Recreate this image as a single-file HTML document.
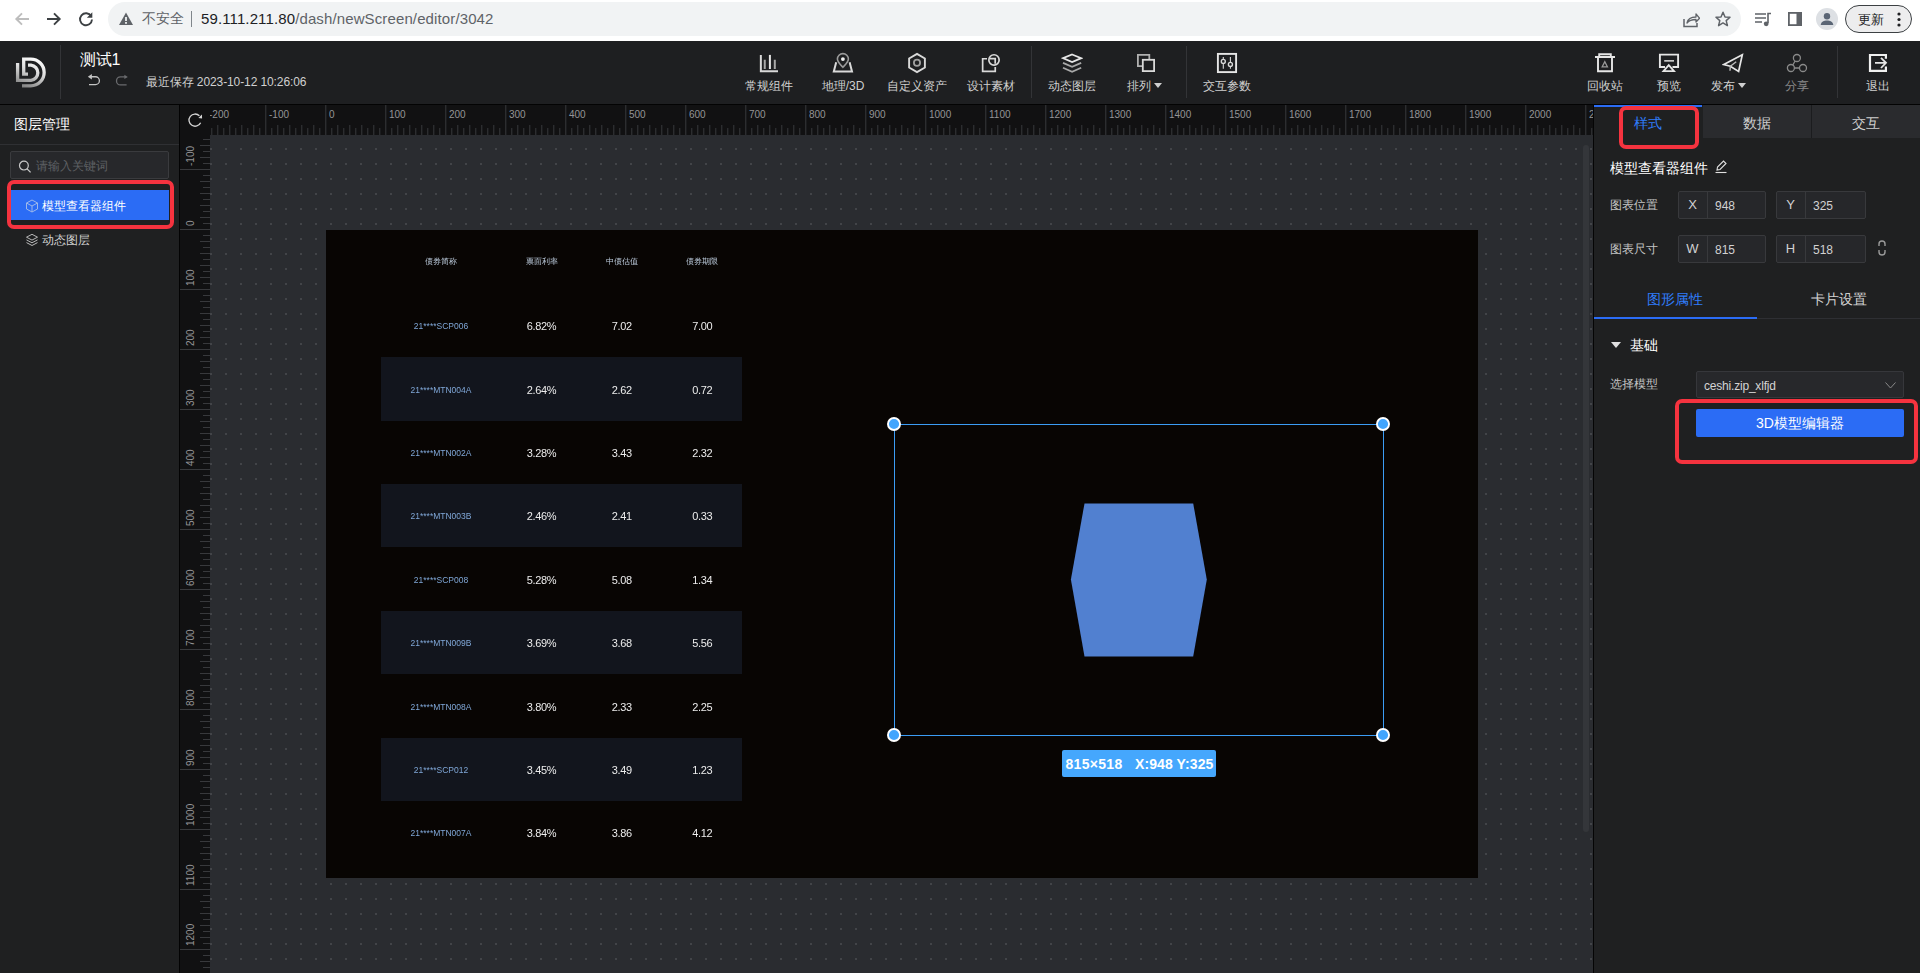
<!DOCTYPE html><html><head><meta charset="utf-8"><style>
*{margin:0;padding:0;box-sizing:border-box}
html,body{width:1920px;height:973px;overflow:hidden;background:#1f2021;font-family:"Liberation Sans", sans-serif}
.a{position:absolute}
.t{position:absolute;white-space:nowrap;line-height:1}
svg{display:block}
</style></head><body><div class="a" style="left:0;top:0;width:1920px;height:41px;background:#ffffff"></div>
<div class="a" style="left:108px;top:2px;width:1633px;height:34px;border-radius:17px;background:#f1f3f4"></div>
<svg class="a" style="left:13px;top:10px" width="18" height="18" viewBox="0 0 18 18"><path d="M16 9H3.5M9 3.3L3.3 9L9 14.7" fill="none" stroke="#bdbdbd" stroke-width="1.9"/></svg>
<svg class="a" style="left:45px;top:10px" width="18" height="18" viewBox="0 0 18 18"><path d="M2 9H14.5M9 3.3L14.7 9L9 14.7" fill="none" stroke="#3c4043" stroke-width="1.9"/></svg>
<svg class="a" style="left:77px;top:10px" width="18" height="18" viewBox="0 0 18 18"><path d="M14.2 6.2A6 6 0 1 0 15 9.5" fill="none" stroke="#3c4043" stroke-width="1.9"/><path d="M15.3 2.3V7.8H9.8Z" fill="#3c4043"/></svg>
<svg class="a" style="left:118px;top:11px" width="16" height="16" viewBox="0 0 16 16"><path d="M8 1.5L15 14H1Z" fill="#5f6368"/><rect x="7.1" y="6" width="1.8" height="4" fill="#f1f3f4"/><rect x="7.1" y="11" width="1.8" height="1.8" fill="#f1f3f4"/></svg>
<div class="t" style="left:142px;top:11px;font-size:14px;color:#5f6368">不安全</div>
<div class="a" style="left:191px;top:11px;width:1px;height:16px;background:#80868b"></div>
<div class="t" style="left:201px;top:10.5px;font-size:15px;letter-spacing:0.12px;color:#5f6368"><span style="color:#202124">59.111.211.80</span>/dash/newScreen/editor/3042</div>
<svg class="a" style="left:1683px;top:11px" width="17" height="17" viewBox="0 0 17 17"><path d="M1 8V15.5H14V12" fill="none" stroke="#5f6368" stroke-width="1.5"/><path d="M4 12C5 7 9 6 13 6V3L16.5 7.2L13 11V8.5C9 8.5 6 9.5 4 12Z" fill="none" stroke="#5f6368" stroke-width="1.3" stroke-linejoin="round"/></svg>
<svg class="a" style="left:1715px;top:11px" width="16" height="16" viewBox="0 0 16 16"><path d="M8 1.2L10 6L15 6.3L11.2 9.6L12.4 14.6L8 11.9L3.6 14.6L4.8 9.6L1 6.3L6 6Z" fill="none" stroke="#5f6368" stroke-width="1.5" stroke-linejoin="round"/></svg>
<svg class="a" style="left:1754px;top:12px" width="18" height="15" viewBox="0 0 18 15"><path d="M1 2H12M1 6H12M1 10H8" stroke="#5f6368" stroke-width="1.6"/><path d="M14 11V1.5H17" fill="none" stroke="#5f6368" stroke-width="1.6"/><circle cx="12.2" cy="11.8" r="2.4" fill="#5f6368"/></svg>
<svg class="a" style="left:1788px;top:12px" width="14" height="14" viewBox="0 0 14 14"><rect x="0.9" y="0.9" width="12.2" height="12.2" fill="none" stroke="#5f6368" stroke-width="1.8"/><rect x="8.5" y="0.9" width="4.6" height="12.2" fill="#5f6368"/></svg>
<div class="a" style="left:1816px;top:8px;width:22px;height:22px;border-radius:50%;background:#dde0e4"></div>
<svg class="a" style="left:1816px;top:8px" width="22" height="22" viewBox="0 0 22 22"><circle cx="11" cy="8.3" r="3.2" fill="#5a6575"/><path d="M4.7 17C5.2 13.6 8 12.6 11 12.6S16.8 13.6 17.3 17Z" fill="#5a6575"/></svg>
<div class="a" style="left:1845px;top:5px;width:67px;height:28px;border-radius:14px;border:1px solid #3c4043;background:#ededee"></div>
<div class="t" style="left:1858px;top:12.5px;font-size:13px;color:#202124">更新</div>
<svg class="a" style="left:1895.5px;top:11px" width="6" height="17" viewBox="0 0 6 17"><circle cx="3" cy="3" r="1.6" fill="#202124"/><circle cx="3" cy="8.5" r="1.6" fill="#202124"/><circle cx="3" cy="14" r="1.6" fill="#202124"/></svg>
<div class="a" style="left:0;top:41px;width:1920px;height:63px;background:#1e1f21"></div>
<div class="a" style="left:0;top:104px;width:1920px;height:1px;background:#030303"></div>
<svg class="a" style="left:10px;top:50px" width="45" height="45" viewBox="10 50 45 45"><defs><linearGradient id="lg" gradientUnits="userSpaceOnUse" x1="36" y1="57" x2="24" y2="89"><stop offset="0" stop-color="#ffffff"/><stop offset="0.4" stop-color="#e0e0e0"/><stop offset="1" stop-color="#7a7a7a"/></linearGradient></defs>
<path d="M17.6 63V80.4H31A7.7 7.7 0 0 0 31 65.1H28" fill="none" stroke="url(#lg)" stroke-width="3.3"/>
<path d="M28 74.1H23.7V59.1H30.8A13.35 13.35 0 0 1 30.8 85.8H22" fill="none" stroke="url(#lg)" stroke-width="3.3"/></svg>
<div class="a" style="left:60px;top:45px;width:1px;height:54px;background:#333437"></div>
<div class="t" style="left:80px;top:52px;font-size:16px;color:#ffffff;letter-spacing:-0.3px">测试1</div>
<svg class="a" style="left:87px;top:73px" width="14" height="14" viewBox="0 0 14 14"><path d="M4 3.75H8.5A3.9 3.9 0 0 1 8.5 11.55H2" fill="none" stroke="#c4c4c4" stroke-width="1.3"/><path d="M0.8 3.75L4.9 0.9V6.6Z" fill="#c4c4c4"/></svg>
<svg class="a" style="left:115px;top:73px" width="14" height="14" viewBox="0 0 14 14"><path d="M10 3.9H5.5A4 4 0 0 0 5.5 11.9H11.6" fill="none" stroke="#6a6b6e" stroke-width="1.3"/><path d="M12.8 3.9L9.4 1.7V6.1Z" fill="#6a6b6e"/></svg>
<div class="t" style="left:146px;top:76px;font-size:12px;color:#d0d0d0;letter-spacing:-0.1px">最近保存 2023-10-12 10:26:06</div>
<svg class="a" style="left:758px;top:52px" width="22" height="22" viewBox="0 0 22 22"><path d="M2.85 2.9V19.25H20" fill="none" stroke="#d9d9d9" stroke-width="2"/><path d="M11.9 2.9V17" fill="none" stroke="#e6e6e6" stroke-width="2"/><path d="M6.75 7.8V17M16.8 7.8V17" fill="none" stroke="#a8a8a8" stroke-width="2"/></svg>
<div class="t" style="left:729px;top:80px;width:80px;text-align:center;font-size:12px;color:#cfcfcf">常规组件</div>
<svg class="a" style="left:832px;top:52px" width="22" height="22" viewBox="0 0 22 22"><path d="M10.9 15.3C8.3 12.6 5.4 10 5.4 7.1A5.5 5.5 0 0 1 16.4 7.1C16.4 10 13.5 12.6 10.9 15.3Z" fill="none" stroke="#9a9a9a" stroke-width="1.6"/><circle cx="10.9" cy="7.1" r="1.9" fill="#f0f0f0"/><path d="M4.2 10.2L1.8 19.5H20L17.6 10.2" fill="none" stroke="#d9d9d9" stroke-width="2"/></svg>
<div class="t" style="left:803px;top:80px;width:80px;text-align:center;font-size:12px;color:#cfcfcf">地理/3D</div>
<svg class="a" style="left:906px;top:52px" width="22" height="22" viewBox="0 0 22 22"><path d="M11 1.9L18.88 6.45V15.55L11 20.1L3.12 15.55V6.45Z" fill="none" stroke="#d9d9d9" stroke-width="1.9"/><circle cx="11" cy="10.8" r="3.1" fill="none" stroke="#a0a0a0" stroke-width="1.8"/></svg>
<div class="t" style="left:877px;top:80px;width:80px;text-align:center;font-size:12px;color:#cfcfcf">自定义资产</div>
<svg class="a" style="left:980px;top:52px" width="22" height="22" viewBox="0 0 22 22"><path d="M7 6.75H2.65V19.35H15.25V15" fill="none" stroke="#d9d9d9" stroke-width="1.7"/><circle cx="14" cy="7.9" r="5.15" fill="none" stroke="#d9d9d9" stroke-width="1.7"/><path d="M9.8 6.6H15.2V11.8" fill="none" stroke="#d9d9d9" stroke-width="1.7"/></svg>
<div class="t" style="left:951px;top:80px;width:80px;text-align:center;font-size:12px;color:#cfcfcf">设计素材</div>
<div class="a" style="left:1031px;top:46px;width:1px;height:52px;background:#333437"></div>
<svg class="a" style="left:1061px;top:52px" width="22" height="22" viewBox="0 0 22 22"><path d="M11.1 2.5L20.2 6.2L11.1 10L2 6.2Z" fill="none" stroke="#e6e6e6" stroke-width="1.8"/><path d="M2 10.9L11.1 14.8L20.2 10.9M2 15.8L11.1 19.8L20.2 15.8" fill="none" stroke="#a8a8a8" stroke-width="1.8"/></svg>
<div class="t" style="left:1032px;top:80px;width:80px;text-align:center;font-size:12px;color:#cfcfcf">动态图层</div>
<svg class="a" style="left:1135px;top:52px" width="22" height="22" viewBox="0 0 22 22"><path d="M7.8 14.1H2.9V2.9H14.3V7.8" fill="none" stroke="#b0b0b0" stroke-width="1.8"/><rect x="7.8" y="7.8" width="11.3" height="11.3" fill="none" stroke="#d9d9d9" stroke-width="1.8"/></svg>
<div class="t" style="left:1114px;top:80px;width:50px;text-align:center;font-size:12px;color:#cfcfcf">排列</div>
<svg class="a" style="left:1154px;top:83px" width="8" height="5" viewBox="0 0 8 5"><path d="M0 0H8L4 5Z" fill="#cfcfcf"/></svg>
<div class="a" style="left:1186px;top:46px;width:1px;height:52px;background:#333437"></div>
<svg class="a" style="left:1216px;top:52px" width="22" height="22" viewBox="0 0 22 22"><rect x="1.9" y="1.9" width="18.2" height="18.2" fill="none" stroke="#e6e6e6" stroke-width="1.9"/><path d="M7.3 5V16.8M14.4 5V16.8" fill="none" stroke="#d9d9d9" stroke-width="1.1"/><circle cx="7.3" cy="9.4" r="2" fill="#1e1f21" stroke="#d9d9d9" stroke-width="1.4"/><circle cx="14.4" cy="12.4" r="2" fill="#1e1f21" stroke="#d9d9d9" stroke-width="1.4"/></svg>
<div class="t" style="left:1187px;top:80px;width:80px;text-align:center;font-size:12px;color:#cfcfcf">交互参数</div>
<svg class="a" style="left:1594px;top:52px" width="22" height="22" viewBox="0 0 22 22"><path d="M1 5H21M5.2 5V2.3H16.8V5M4 5V19.2H18V5" fill="none" stroke="#e6e6e6" stroke-width="1.9"/><path d="M8.2 14.8L10.8 9.6L13.4 14.8Z" fill="none" stroke="#9a9a9a" stroke-width="1.3"/></svg>
<div class="t" style="left:1565px;top:80px;width:80px;text-align:center;font-size:12px;color:#cfcfcf">回收站</div>
<svg class="a" style="left:1658px;top:52px" width="22" height="22" viewBox="0 0 22 22"><path d="M7 15H1.9V2.65H20.1V15H14.5" fill="none" stroke="#e6e6e6" stroke-width="1.9"/><path d="M6.2 8.85H16" fill="none" stroke="#c8c8c8" stroke-width="1.7"/><path d="M10.75 13.2L16 19.1H5.5Z" fill="none" stroke="#e6e6e6" stroke-width="1.8"/></svg>
<div class="t" style="left:1629px;top:80px;width:80px;text-align:center;font-size:12px;color:#cfcfcf">预览</div>
<svg class="a" style="left:1722px;top:52px" width="22" height="22" viewBox="0 0 22 22"><path d="M20.3 2.8L1.8 12.6L8.3 14.3L16.6 19.4Z" fill="none" stroke="#e6e6e6" stroke-width="1.7" stroke-linejoin="miter"/><path d="M14.2 9.8L8.3 14.3L8 18.8" fill="none" stroke="#bdbdbd" stroke-width="1.4"/></svg>
<div class="t" style="left:1698px;top:80px;width:50px;text-align:center;font-size:12px;color:#cfcfcf">发布</div>
<svg class="a" style="left:1738px;top:83px" width="8" height="5" viewBox="0 0 8 5"><path d="M0 0H8L4 5Z" fill="#cfcfcf"/></svg>
<svg class="a" style="left:1786px;top:52px" width="22" height="22" viewBox="0 0 22 22"><circle cx="10.9" cy="6" r="3.5" fill="none" stroke="#8a8a8a" stroke-width="1.3"/><circle cx="4.9" cy="16" r="3.5" fill="none" stroke="#8a8a8a" stroke-width="1.3"/><circle cx="17" cy="16" r="3.5" fill="none" stroke="#8a8a8a" stroke-width="1.3"/><path d="M9.1 9L6.8 13M8.4 16H13.5" fill="none" stroke="#8a8a8a" stroke-width="1.3"/></svg>
<div class="t" style="left:1757px;top:80px;width:80px;text-align:center;font-size:12px;color:#8a8a8a">分享</div>
<div class="a" style="left:1837px;top:46px;width:1px;height:52px;background:#333437"></div>
<svg class="a" style="left:1867px;top:52px" width="22" height="22" viewBox="0 0 22 22"><path d="M18.9 6.75V3H3V18.9H18.9V14.6" fill="none" stroke="#f0f0f0" stroke-width="2.2"/><path d="M8 10.8H18.5M14 5.8L19 10.8L14 16" fill="none" stroke="#e6e6e6" stroke-width="1.8"/></svg>
<div class="t" style="left:1838px;top:80px;width:80px;text-align:center;font-size:12px;color:#cfcfcf">退出</div>
<div class="a" style="left:0;top:105px;width:179px;height:868px;background:#1f2021"></div>
<div class="a" style="left:179px;top:105px;width:1px;height:868px;background:#030303"></div>
<div class="t" style="left:14px;top:117px;font-size:14px;font-weight:500;color:#ffffff">图层管理</div>
<div class="a" style="left:0;top:144px;width:179px;height:1px;background:#2f3033"></div>
<div class="a" style="left:10px;top:151px;width:159px;height:28px;border:1px solid #3a3b3e;border-radius:2px;background:#27282b"></div>
<svg class="a" style="left:18px;top:160px" width="14" height="14" viewBox="0 0 14 14"><circle cx="5.9" cy="5.6" r="4.4" fill="none" stroke="#c8c8c8" stroke-width="1.2"/><path d="M9.1 8.9L12.6 12.4" stroke="#c8c8c8" stroke-width="1.3"/></svg>
<div class="t" style="left:36px;top:160px;font-size:12px;color:#5e6064">请输入关键词</div>
<div class="a" style="left:11px;top:190px;width:158px;height:30px;background:#2b6cf5"></div>
<svg class="a" style="left:25px;top:199px" width="14" height="14" viewBox="0 0 14 14"><path d="M7 1L12.5 4V10L7 13L1.5 10V4Z M1.5 4L7 7L12.5 4M7 7V13" fill="none" stroke="#9db8ea" stroke-width="1"/></svg>
<div class="t" style="left:42px;top:200px;font-size:12px;font-weight:500;color:#ffffff">模型查看器组件</div>
<svg class="a" style="left:25px;top:233px" width="14" height="14" viewBox="0 0 14 14"><path d="M7 1.3L12.5 4.2L7 7.1L1.5 4.2Z" fill="none" stroke="#c0c0c0" stroke-width="0.95"/><path d="M1.5 6.9L7 9.8L12.5 6.9M1.5 9.6L7 12.5L12.5 9.6" fill="none" stroke="#c0c0c0" stroke-width="0.95"/></svg>
<div class="t" style="left:42px;top:234px;font-size:12px;color:#d0d0d0">动态图层</div>
<div class="a" style="left:7px;top:179.7px;width:167px;height:49.2px;border:4.3px solid #f5333f;border-radius:7px"></div>
<div class="a" style="left:180px;top:105px;width:1413px;height:868px;background:#111112"></div>
<svg class="a" style="left:210px;top:135px" width="1383" height="838"><defs><pattern id="dots" x="0" y="13" width="15" height="15" patternUnits="userSpaceOnUse"><rect x="0" y="0" width="2" height="2" fill="#424448"/></pattern></defs><rect width="1383" height="838" fill="#2a2c30"/><rect width="1383" height="838" fill="url(#dots)"/></svg>
<svg style="position:absolute;left:210px;top:105px" width="1383" height="30" viewBox="0 0 1383 30"><line x1="1.8000000000000114" y1="23" x2="1.8000000000000114" y2="30" stroke="#38393c" stroke-width="1"/><line x1="7.800000000000011" y1="20" x2="7.800000000000011" y2="30" stroke="#38393c" stroke-width="1"/><line x1="13.800000000000011" y1="23" x2="13.800000000000011" y2="30" stroke="#38393c" stroke-width="1"/><line x1="19.80000000000001" y1="20" x2="19.80000000000001" y2="30" stroke="#38393c" stroke-width="1"/><line x1="25.80000000000001" y1="23" x2="25.80000000000001" y2="30" stroke="#38393c" stroke-width="1"/><line x1="31.80000000000001" y1="20" x2="31.80000000000001" y2="30" stroke="#38393c" stroke-width="1"/><line x1="37.80000000000001" y1="23" x2="37.80000000000001" y2="30" stroke="#38393c" stroke-width="1"/><line x1="43.80000000000001" y1="20" x2="43.80000000000001" y2="30" stroke="#38393c" stroke-width="1"/><line x1="49.80000000000001" y1="23" x2="49.80000000000001" y2="30" stroke="#38393c" stroke-width="1"/><line x1="55.80000000000001" y1="0" x2="55.80000000000001" y2="30" stroke="#38393c" stroke-width="1"/><line x1="61.80000000000001" y1="23" x2="61.80000000000001" y2="30" stroke="#38393c" stroke-width="1"/><line x1="67.80000000000001" y1="20" x2="67.80000000000001" y2="30" stroke="#38393c" stroke-width="1"/><line x1="73.80000000000001" y1="23" x2="73.80000000000001" y2="30" stroke="#38393c" stroke-width="1"/><line x1="79.80000000000001" y1="20" x2="79.80000000000001" y2="30" stroke="#38393c" stroke-width="1"/><line x1="85.80000000000001" y1="23" x2="85.80000000000001" y2="30" stroke="#38393c" stroke-width="1"/><line x1="91.80000000000001" y1="20" x2="91.80000000000001" y2="30" stroke="#38393c" stroke-width="1"/><line x1="97.80000000000001" y1="23" x2="97.80000000000001" y2="30" stroke="#38393c" stroke-width="1"/><line x1="103.80000000000001" y1="20" x2="103.80000000000001" y2="30" stroke="#38393c" stroke-width="1"/><line x1="109.80000000000001" y1="23" x2="109.80000000000001" y2="30" stroke="#38393c" stroke-width="1"/><line x1="115.80000000000001" y1="0" x2="115.80000000000001" y2="30" stroke="#38393c" stroke-width="1"/><line x1="121.80000000000001" y1="23" x2="121.80000000000001" y2="30" stroke="#38393c" stroke-width="1"/><line x1="127.80000000000001" y1="20" x2="127.80000000000001" y2="30" stroke="#38393c" stroke-width="1"/><line x1="133.8" y1="23" x2="133.8" y2="30" stroke="#38393c" stroke-width="1"/><line x1="139.8" y1="20" x2="139.8" y2="30" stroke="#38393c" stroke-width="1"/><line x1="145.8" y1="23" x2="145.8" y2="30" stroke="#38393c" stroke-width="1"/><line x1="151.8" y1="20" x2="151.8" y2="30" stroke="#38393c" stroke-width="1"/><line x1="157.8" y1="23" x2="157.8" y2="30" stroke="#38393c" stroke-width="1"/><line x1="163.8" y1="20" x2="163.8" y2="30" stroke="#38393c" stroke-width="1"/><line x1="169.8" y1="23" x2="169.8" y2="30" stroke="#38393c" stroke-width="1"/><line x1="175.8" y1="0" x2="175.8" y2="30" stroke="#38393c" stroke-width="1"/><line x1="181.8" y1="23" x2="181.8" y2="30" stroke="#38393c" stroke-width="1"/><line x1="187.8" y1="20" x2="187.8" y2="30" stroke="#38393c" stroke-width="1"/><line x1="193.8" y1="23" x2="193.8" y2="30" stroke="#38393c" stroke-width="1"/><line x1="199.8" y1="20" x2="199.8" y2="30" stroke="#38393c" stroke-width="1"/><line x1="205.8" y1="23" x2="205.8" y2="30" stroke="#38393c" stroke-width="1"/><line x1="211.8" y1="20" x2="211.8" y2="30" stroke="#38393c" stroke-width="1"/><line x1="217.8" y1="23" x2="217.8" y2="30" stroke="#38393c" stroke-width="1"/><line x1="223.8" y1="20" x2="223.8" y2="30" stroke="#38393c" stroke-width="1"/><line x1="229.8" y1="23" x2="229.8" y2="30" stroke="#38393c" stroke-width="1"/><line x1="235.8" y1="0" x2="235.8" y2="30" stroke="#38393c" stroke-width="1"/><line x1="241.8" y1="23" x2="241.8" y2="30" stroke="#38393c" stroke-width="1"/><line x1="247.8" y1="20" x2="247.8" y2="30" stroke="#38393c" stroke-width="1"/><line x1="253.8" y1="23" x2="253.8" y2="30" stroke="#38393c" stroke-width="1"/><line x1="259.8" y1="20" x2="259.8" y2="30" stroke="#38393c" stroke-width="1"/><line x1="265.8" y1="23" x2="265.8" y2="30" stroke="#38393c" stroke-width="1"/><line x1="271.8" y1="20" x2="271.8" y2="30" stroke="#38393c" stroke-width="1"/><line x1="277.8" y1="23" x2="277.8" y2="30" stroke="#38393c" stroke-width="1"/><line x1="283.8" y1="20" x2="283.8" y2="30" stroke="#38393c" stroke-width="1"/><line x1="289.8" y1="23" x2="289.8" y2="30" stroke="#38393c" stroke-width="1"/><line x1="295.8" y1="0" x2="295.8" y2="30" stroke="#38393c" stroke-width="1"/><line x1="301.8" y1="23" x2="301.8" y2="30" stroke="#38393c" stroke-width="1"/><line x1="307.79999999999995" y1="20" x2="307.79999999999995" y2="30" stroke="#38393c" stroke-width="1"/><line x1="313.79999999999995" y1="23" x2="313.79999999999995" y2="30" stroke="#38393c" stroke-width="1"/><line x1="319.79999999999995" y1="20" x2="319.79999999999995" y2="30" stroke="#38393c" stroke-width="1"/><line x1="325.79999999999995" y1="23" x2="325.79999999999995" y2="30" stroke="#38393c" stroke-width="1"/><line x1="331.79999999999995" y1="20" x2="331.79999999999995" y2="30" stroke="#38393c" stroke-width="1"/><line x1="337.79999999999995" y1="23" x2="337.79999999999995" y2="30" stroke="#38393c" stroke-width="1"/><line x1="343.79999999999995" y1="20" x2="343.79999999999995" y2="30" stroke="#38393c" stroke-width="1"/><line x1="349.79999999999995" y1="23" x2="349.79999999999995" y2="30" stroke="#38393c" stroke-width="1"/><line x1="355.79999999999995" y1="0" x2="355.79999999999995" y2="30" stroke="#38393c" stroke-width="1"/><line x1="361.79999999999995" y1="23" x2="361.79999999999995" y2="30" stroke="#38393c" stroke-width="1"/><line x1="367.79999999999995" y1="20" x2="367.79999999999995" y2="30" stroke="#38393c" stroke-width="1"/><line x1="373.79999999999995" y1="23" x2="373.79999999999995" y2="30" stroke="#38393c" stroke-width="1"/><line x1="379.79999999999995" y1="20" x2="379.79999999999995" y2="30" stroke="#38393c" stroke-width="1"/><line x1="385.79999999999995" y1="23" x2="385.79999999999995" y2="30" stroke="#38393c" stroke-width="1"/><line x1="391.79999999999995" y1="20" x2="391.79999999999995" y2="30" stroke="#38393c" stroke-width="1"/><line x1="397.79999999999995" y1="23" x2="397.79999999999995" y2="30" stroke="#38393c" stroke-width="1"/><line x1="403.79999999999995" y1="20" x2="403.79999999999995" y2="30" stroke="#38393c" stroke-width="1"/><line x1="409.79999999999995" y1="23" x2="409.79999999999995" y2="30" stroke="#38393c" stroke-width="1"/><line x1="415.79999999999995" y1="0" x2="415.79999999999995" y2="30" stroke="#38393c" stroke-width="1"/><line x1="421.79999999999995" y1="23" x2="421.79999999999995" y2="30" stroke="#38393c" stroke-width="1"/><line x1="427.79999999999995" y1="20" x2="427.79999999999995" y2="30" stroke="#38393c" stroke-width="1"/><line x1="433.79999999999995" y1="23" x2="433.79999999999995" y2="30" stroke="#38393c" stroke-width="1"/><line x1="439.79999999999995" y1="20" x2="439.79999999999995" y2="30" stroke="#38393c" stroke-width="1"/><line x1="445.79999999999995" y1="23" x2="445.79999999999995" y2="30" stroke="#38393c" stroke-width="1"/><line x1="451.79999999999995" y1="20" x2="451.79999999999995" y2="30" stroke="#38393c" stroke-width="1"/><line x1="457.79999999999995" y1="23" x2="457.79999999999995" y2="30" stroke="#38393c" stroke-width="1"/><line x1="463.79999999999995" y1="20" x2="463.79999999999995" y2="30" stroke="#38393c" stroke-width="1"/><line x1="469.79999999999995" y1="23" x2="469.79999999999995" y2="30" stroke="#38393c" stroke-width="1"/><line x1="475.79999999999995" y1="0" x2="475.79999999999995" y2="30" stroke="#38393c" stroke-width="1"/><line x1="481.79999999999995" y1="23" x2="481.79999999999995" y2="30" stroke="#38393c" stroke-width="1"/><line x1="487.79999999999995" y1="20" x2="487.79999999999995" y2="30" stroke="#38393c" stroke-width="1"/><line x1="493.79999999999995" y1="23" x2="493.79999999999995" y2="30" stroke="#38393c" stroke-width="1"/><line x1="499.79999999999995" y1="20" x2="499.79999999999995" y2="30" stroke="#38393c" stroke-width="1"/><line x1="505.79999999999995" y1="23" x2="505.79999999999995" y2="30" stroke="#38393c" stroke-width="1"/><line x1="511.79999999999995" y1="20" x2="511.79999999999995" y2="30" stroke="#38393c" stroke-width="1"/><line x1="517.8" y1="23" x2="517.8" y2="30" stroke="#38393c" stroke-width="1"/><line x1="523.8" y1="20" x2="523.8" y2="30" stroke="#38393c" stroke-width="1"/><line x1="529.8" y1="23" x2="529.8" y2="30" stroke="#38393c" stroke-width="1"/><line x1="535.8" y1="0" x2="535.8" y2="30" stroke="#38393c" stroke-width="1"/><line x1="541.8" y1="23" x2="541.8" y2="30" stroke="#38393c" stroke-width="1"/><line x1="547.8" y1="20" x2="547.8" y2="30" stroke="#38393c" stroke-width="1"/><line x1="553.8" y1="23" x2="553.8" y2="30" stroke="#38393c" stroke-width="1"/><line x1="559.8" y1="20" x2="559.8" y2="30" stroke="#38393c" stroke-width="1"/><line x1="565.8" y1="23" x2="565.8" y2="30" stroke="#38393c" stroke-width="1"/><line x1="571.8" y1="20" x2="571.8" y2="30" stroke="#38393c" stroke-width="1"/><line x1="577.8" y1="23" x2="577.8" y2="30" stroke="#38393c" stroke-width="1"/><line x1="583.8" y1="20" x2="583.8" y2="30" stroke="#38393c" stroke-width="1"/><line x1="589.8" y1="23" x2="589.8" y2="30" stroke="#38393c" stroke-width="1"/><line x1="595.8" y1="0" x2="595.8" y2="30" stroke="#38393c" stroke-width="1"/><line x1="601.8" y1="23" x2="601.8" y2="30" stroke="#38393c" stroke-width="1"/><line x1="607.8" y1="20" x2="607.8" y2="30" stroke="#38393c" stroke-width="1"/><line x1="613.8" y1="23" x2="613.8" y2="30" stroke="#38393c" stroke-width="1"/><line x1="619.8" y1="20" x2="619.8" y2="30" stroke="#38393c" stroke-width="1"/><line x1="625.8" y1="23" x2="625.8" y2="30" stroke="#38393c" stroke-width="1"/><line x1="631.8" y1="20" x2="631.8" y2="30" stroke="#38393c" stroke-width="1"/><line x1="637.8" y1="23" x2="637.8" y2="30" stroke="#38393c" stroke-width="1"/><line x1="643.8" y1="20" x2="643.8" y2="30" stroke="#38393c" stroke-width="1"/><line x1="649.8" y1="23" x2="649.8" y2="30" stroke="#38393c" stroke-width="1"/><line x1="655.8" y1="0" x2="655.8" y2="30" stroke="#38393c" stroke-width="1"/><line x1="661.8" y1="23" x2="661.8" y2="30" stroke="#38393c" stroke-width="1"/><line x1="667.8" y1="20" x2="667.8" y2="30" stroke="#38393c" stroke-width="1"/><line x1="673.8" y1="23" x2="673.8" y2="30" stroke="#38393c" stroke-width="1"/><line x1="679.8" y1="20" x2="679.8" y2="30" stroke="#38393c" stroke-width="1"/><line x1="685.8" y1="23" x2="685.8" y2="30" stroke="#38393c" stroke-width="1"/><line x1="691.8" y1="20" x2="691.8" y2="30" stroke="#38393c" stroke-width="1"/><line x1="697.8" y1="23" x2="697.8" y2="30" stroke="#38393c" stroke-width="1"/><line x1="703.8" y1="20" x2="703.8" y2="30" stroke="#38393c" stroke-width="1"/><line x1="709.8" y1="23" x2="709.8" y2="30" stroke="#38393c" stroke-width="1"/><line x1="715.8" y1="0" x2="715.8" y2="30" stroke="#38393c" stroke-width="1"/><line x1="721.8" y1="23" x2="721.8" y2="30" stroke="#38393c" stroke-width="1"/><line x1="727.8" y1="20" x2="727.8" y2="30" stroke="#38393c" stroke-width="1"/><line x1="733.8" y1="23" x2="733.8" y2="30" stroke="#38393c" stroke-width="1"/><line x1="739.8" y1="20" x2="739.8" y2="30" stroke="#38393c" stroke-width="1"/><line x1="745.8" y1="23" x2="745.8" y2="30" stroke="#38393c" stroke-width="1"/><line x1="751.8" y1="20" x2="751.8" y2="30" stroke="#38393c" stroke-width="1"/><line x1="757.8" y1="23" x2="757.8" y2="30" stroke="#38393c" stroke-width="1"/><line x1="763.8" y1="20" x2="763.8" y2="30" stroke="#38393c" stroke-width="1"/><line x1="769.8" y1="23" x2="769.8" y2="30" stroke="#38393c" stroke-width="1"/><line x1="775.8" y1="0" x2="775.8" y2="30" stroke="#38393c" stroke-width="1"/><line x1="781.8" y1="23" x2="781.8" y2="30" stroke="#38393c" stroke-width="1"/><line x1="787.8" y1="20" x2="787.8" y2="30" stroke="#38393c" stroke-width="1"/><line x1="793.8" y1="23" x2="793.8" y2="30" stroke="#38393c" stroke-width="1"/><line x1="799.8" y1="20" x2="799.8" y2="30" stroke="#38393c" stroke-width="1"/><line x1="805.8" y1="23" x2="805.8" y2="30" stroke="#38393c" stroke-width="1"/><line x1="811.8" y1="20" x2="811.8" y2="30" stroke="#38393c" stroke-width="1"/><line x1="817.8" y1="23" x2="817.8" y2="30" stroke="#38393c" stroke-width="1"/><line x1="823.8" y1="20" x2="823.8" y2="30" stroke="#38393c" stroke-width="1"/><line x1="829.8" y1="23" x2="829.8" y2="30" stroke="#38393c" stroke-width="1"/><line x1="835.8" y1="0" x2="835.8" y2="30" stroke="#38393c" stroke-width="1"/><line x1="841.8" y1="23" x2="841.8" y2="30" stroke="#38393c" stroke-width="1"/><line x1="847.8" y1="20" x2="847.8" y2="30" stroke="#38393c" stroke-width="1"/><line x1="853.8" y1="23" x2="853.8" y2="30" stroke="#38393c" stroke-width="1"/><line x1="859.8" y1="20" x2="859.8" y2="30" stroke="#38393c" stroke-width="1"/><line x1="865.8" y1="23" x2="865.8" y2="30" stroke="#38393c" stroke-width="1"/><line x1="871.8" y1="20" x2="871.8" y2="30" stroke="#38393c" stroke-width="1"/><line x1="877.8" y1="23" x2="877.8" y2="30" stroke="#38393c" stroke-width="1"/><line x1="883.8" y1="20" x2="883.8" y2="30" stroke="#38393c" stroke-width="1"/><line x1="889.8" y1="23" x2="889.8" y2="30" stroke="#38393c" stroke-width="1"/><line x1="895.8" y1="0" x2="895.8" y2="30" stroke="#38393c" stroke-width="1"/><line x1="901.8" y1="23" x2="901.8" y2="30" stroke="#38393c" stroke-width="1"/><line x1="907.8" y1="20" x2="907.8" y2="30" stroke="#38393c" stroke-width="1"/><line x1="913.8" y1="23" x2="913.8" y2="30" stroke="#38393c" stroke-width="1"/><line x1="919.8" y1="20" x2="919.8" y2="30" stroke="#38393c" stroke-width="1"/><line x1="925.8" y1="23" x2="925.8" y2="30" stroke="#38393c" stroke-width="1"/><line x1="931.8" y1="20" x2="931.8" y2="30" stroke="#38393c" stroke-width="1"/><line x1="937.8" y1="23" x2="937.8" y2="30" stroke="#38393c" stroke-width="1"/><line x1="943.8" y1="20" x2="943.8" y2="30" stroke="#38393c" stroke-width="1"/><line x1="949.8" y1="23" x2="949.8" y2="30" stroke="#38393c" stroke-width="1"/><line x1="955.8" y1="0" x2="955.8" y2="30" stroke="#38393c" stroke-width="1"/><line x1="961.8" y1="23" x2="961.8" y2="30" stroke="#38393c" stroke-width="1"/><line x1="967.8" y1="20" x2="967.8" y2="30" stroke="#38393c" stroke-width="1"/><line x1="973.8" y1="23" x2="973.8" y2="30" stroke="#38393c" stroke-width="1"/><line x1="979.8" y1="20" x2="979.8" y2="30" stroke="#38393c" stroke-width="1"/><line x1="985.8" y1="23" x2="985.8" y2="30" stroke="#38393c" stroke-width="1"/><line x1="991.8" y1="20" x2="991.8" y2="30" stroke="#38393c" stroke-width="1"/><line x1="997.8" y1="23" x2="997.8" y2="30" stroke="#38393c" stroke-width="1"/><line x1="1003.8" y1="20" x2="1003.8" y2="30" stroke="#38393c" stroke-width="1"/><line x1="1009.8" y1="23" x2="1009.8" y2="30" stroke="#38393c" stroke-width="1"/><line x1="1015.8" y1="0" x2="1015.8" y2="30" stroke="#38393c" stroke-width="1"/><line x1="1021.8" y1="23" x2="1021.8" y2="30" stroke="#38393c" stroke-width="1"/><line x1="1027.8" y1="20" x2="1027.8" y2="30" stroke="#38393c" stroke-width="1"/><line x1="1033.8" y1="23" x2="1033.8" y2="30" stroke="#38393c" stroke-width="1"/><line x1="1039.8" y1="20" x2="1039.8" y2="30" stroke="#38393c" stroke-width="1"/><line x1="1045.8" y1="23" x2="1045.8" y2="30" stroke="#38393c" stroke-width="1"/><line x1="1051.8" y1="20" x2="1051.8" y2="30" stroke="#38393c" stroke-width="1"/><line x1="1057.8" y1="23" x2="1057.8" y2="30" stroke="#38393c" stroke-width="1"/><line x1="1063.8" y1="20" x2="1063.8" y2="30" stroke="#38393c" stroke-width="1"/><line x1="1069.8" y1="23" x2="1069.8" y2="30" stroke="#38393c" stroke-width="1"/><line x1="1075.8" y1="0" x2="1075.8" y2="30" stroke="#38393c" stroke-width="1"/><line x1="1081.8" y1="23" x2="1081.8" y2="30" stroke="#38393c" stroke-width="1"/><line x1="1087.8" y1="20" x2="1087.8" y2="30" stroke="#38393c" stroke-width="1"/><line x1="1093.8" y1="23" x2="1093.8" y2="30" stroke="#38393c" stroke-width="1"/><line x1="1099.8" y1="20" x2="1099.8" y2="30" stroke="#38393c" stroke-width="1"/><line x1="1105.8" y1="23" x2="1105.8" y2="30" stroke="#38393c" stroke-width="1"/><line x1="1111.8" y1="20" x2="1111.8" y2="30" stroke="#38393c" stroke-width="1"/><line x1="1117.8" y1="23" x2="1117.8" y2="30" stroke="#38393c" stroke-width="1"/><line x1="1123.8" y1="20" x2="1123.8" y2="30" stroke="#38393c" stroke-width="1"/><line x1="1129.8" y1="23" x2="1129.8" y2="30" stroke="#38393c" stroke-width="1"/><line x1="1135.8" y1="0" x2="1135.8" y2="30" stroke="#38393c" stroke-width="1"/><line x1="1141.8" y1="23" x2="1141.8" y2="30" stroke="#38393c" stroke-width="1"/><line x1="1147.8" y1="20" x2="1147.8" y2="30" stroke="#38393c" stroke-width="1"/><line x1="1153.8" y1="23" x2="1153.8" y2="30" stroke="#38393c" stroke-width="1"/><line x1="1159.8" y1="20" x2="1159.8" y2="30" stroke="#38393c" stroke-width="1"/><line x1="1165.8" y1="23" x2="1165.8" y2="30" stroke="#38393c" stroke-width="1"/><line x1="1171.8" y1="20" x2="1171.8" y2="30" stroke="#38393c" stroke-width="1"/><line x1="1177.8" y1="23" x2="1177.8" y2="30" stroke="#38393c" stroke-width="1"/><line x1="1183.8" y1="20" x2="1183.8" y2="30" stroke="#38393c" stroke-width="1"/><line x1="1189.8" y1="23" x2="1189.8" y2="30" stroke="#38393c" stroke-width="1"/><line x1="1195.8" y1="0" x2="1195.8" y2="30" stroke="#38393c" stroke-width="1"/><line x1="1201.8" y1="23" x2="1201.8" y2="30" stroke="#38393c" stroke-width="1"/><line x1="1207.8" y1="20" x2="1207.8" y2="30" stroke="#38393c" stroke-width="1"/><line x1="1213.8" y1="23" x2="1213.8" y2="30" stroke="#38393c" stroke-width="1"/><line x1="1219.8" y1="20" x2="1219.8" y2="30" stroke="#38393c" stroke-width="1"/><line x1="1225.8" y1="23" x2="1225.8" y2="30" stroke="#38393c" stroke-width="1"/><line x1="1231.8" y1="20" x2="1231.8" y2="30" stroke="#38393c" stroke-width="1"/><line x1="1237.8" y1="23" x2="1237.8" y2="30" stroke="#38393c" stroke-width="1"/><line x1="1243.8" y1="20" x2="1243.8" y2="30" stroke="#38393c" stroke-width="1"/><line x1="1249.8" y1="23" x2="1249.8" y2="30" stroke="#38393c" stroke-width="1"/><line x1="1255.8" y1="0" x2="1255.8" y2="30" stroke="#38393c" stroke-width="1"/><line x1="1261.8" y1="23" x2="1261.8" y2="30" stroke="#38393c" stroke-width="1"/><line x1="1267.8" y1="20" x2="1267.8" y2="30" stroke="#38393c" stroke-width="1"/><line x1="1273.8" y1="23" x2="1273.8" y2="30" stroke="#38393c" stroke-width="1"/><line x1="1279.8" y1="20" x2="1279.8" y2="30" stroke="#38393c" stroke-width="1"/><line x1="1285.8" y1="23" x2="1285.8" y2="30" stroke="#38393c" stroke-width="1"/><line x1="1291.8" y1="20" x2="1291.8" y2="30" stroke="#38393c" stroke-width="1"/><line x1="1297.8" y1="23" x2="1297.8" y2="30" stroke="#38393c" stroke-width="1"/><line x1="1303.8" y1="20" x2="1303.8" y2="30" stroke="#38393c" stroke-width="1"/><line x1="1309.8" y1="23" x2="1309.8" y2="30" stroke="#38393c" stroke-width="1"/><line x1="1315.8" y1="0" x2="1315.8" y2="30" stroke="#38393c" stroke-width="1"/><line x1="1321.8" y1="23" x2="1321.8" y2="30" stroke="#38393c" stroke-width="1"/><line x1="1327.8" y1="20" x2="1327.8" y2="30" stroke="#38393c" stroke-width="1"/><line x1="1333.8" y1="23" x2="1333.8" y2="30" stroke="#38393c" stroke-width="1"/><line x1="1339.8" y1="20" x2="1339.8" y2="30" stroke="#38393c" stroke-width="1"/><line x1="1345.8" y1="23" x2="1345.8" y2="30" stroke="#38393c" stroke-width="1"/><line x1="1351.8" y1="20" x2="1351.8" y2="30" stroke="#38393c" stroke-width="1"/><line x1="1357.8" y1="23" x2="1357.8" y2="30" stroke="#38393c" stroke-width="1"/><line x1="1363.8" y1="20" x2="1363.8" y2="30" stroke="#38393c" stroke-width="1"/><line x1="1369.8" y1="23" x2="1369.8" y2="30" stroke="#38393c" stroke-width="1"/><line x1="1375.8" y1="0" x2="1375.8" y2="30" stroke="#38393c" stroke-width="1"/><line x1="1381.8" y1="23" x2="1381.8" y2="30" stroke="#38393c" stroke-width="1"/><text x="-1" y="13" fill="#949496" font-size="10" font-family="Liberation Sans, sans-serif">-200</text><text x="59" y="13" fill="#949496" font-size="10" font-family="Liberation Sans, sans-serif">-100</text><text x="119" y="13" fill="#949496" font-size="10" font-family="Liberation Sans, sans-serif">0</text><text x="179" y="13" fill="#949496" font-size="10" font-family="Liberation Sans, sans-serif">100</text><text x="239" y="13" fill="#949496" font-size="10" font-family="Liberation Sans, sans-serif">200</text><text x="299" y="13" fill="#949496" font-size="10" font-family="Liberation Sans, sans-serif">300</text><text x="359" y="13" fill="#949496" font-size="10" font-family="Liberation Sans, sans-serif">400</text><text x="419" y="13" fill="#949496" font-size="10" font-family="Liberation Sans, sans-serif">500</text><text x="479" y="13" fill="#949496" font-size="10" font-family="Liberation Sans, sans-serif">600</text><text x="539" y="13" fill="#949496" font-size="10" font-family="Liberation Sans, sans-serif">700</text><text x="599" y="13" fill="#949496" font-size="10" font-family="Liberation Sans, sans-serif">800</text><text x="659" y="13" fill="#949496" font-size="10" font-family="Liberation Sans, sans-serif">900</text><text x="719" y="13" fill="#949496" font-size="10" font-family="Liberation Sans, sans-serif">1000</text><text x="779" y="13" fill="#949496" font-size="10" font-family="Liberation Sans, sans-serif">1100</text><text x="839" y="13" fill="#949496" font-size="10" font-family="Liberation Sans, sans-serif">1200</text><text x="899" y="13" fill="#949496" font-size="10" font-family="Liberation Sans, sans-serif">1300</text><text x="959" y="13" fill="#949496" font-size="10" font-family="Liberation Sans, sans-serif">1400</text><text x="1019" y="13" fill="#949496" font-size="10" font-family="Liberation Sans, sans-serif">1500</text><text x="1079" y="13" fill="#949496" font-size="10" font-family="Liberation Sans, sans-serif">1600</text><text x="1139" y="13" fill="#949496" font-size="10" font-family="Liberation Sans, sans-serif">1700</text><text x="1199" y="13" fill="#949496" font-size="10" font-family="Liberation Sans, sans-serif">1800</text><text x="1259" y="13" fill="#949496" font-size="10" font-family="Liberation Sans, sans-serif">1900</text><text x="1319" y="13" fill="#949496" font-size="10" font-family="Liberation Sans, sans-serif">2000</text><text x="1379" y="13" fill="#949496" font-size="10" font-family="Liberation Sans, sans-serif">2100</text><text x="1439" y="13" fill="#949496" font-size="10" font-family="Liberation Sans, sans-serif">2200</text></svg>
<svg style="position:absolute;left:180px;top:135px" width="30" height="838" viewBox="0 0 30 838"><line x1="23" y1="4.5" x2="30" y2="4.5" stroke="#38393c" stroke-width="1"/><line x1="20" y1="10.5" x2="30" y2="10.5" stroke="#38393c" stroke-width="1"/><line x1="23" y1="16.5" x2="30" y2="16.5" stroke="#38393c" stroke-width="1"/><line x1="20" y1="22.5" x2="30" y2="22.5" stroke="#38393c" stroke-width="1"/><line x1="23" y1="28.5" x2="30" y2="28.5" stroke="#38393c" stroke-width="1"/><line x1="0" y1="34.5" x2="30" y2="34.5" stroke="#38393c" stroke-width="1"/><line x1="23" y1="40.5" x2="30" y2="40.5" stroke="#38393c" stroke-width="1"/><line x1="20" y1="46.5" x2="30" y2="46.5" stroke="#38393c" stroke-width="1"/><line x1="23" y1="52.5" x2="30" y2="52.5" stroke="#38393c" stroke-width="1"/><line x1="20" y1="58.5" x2="30" y2="58.5" stroke="#38393c" stroke-width="1"/><line x1="23" y1="64.5" x2="30" y2="64.5" stroke="#38393c" stroke-width="1"/><line x1="20" y1="70.5" x2="30" y2="70.5" stroke="#38393c" stroke-width="1"/><line x1="23" y1="76.5" x2="30" y2="76.5" stroke="#38393c" stroke-width="1"/><line x1="20" y1="82.5" x2="30" y2="82.5" stroke="#38393c" stroke-width="1"/><line x1="23" y1="88.5" x2="30" y2="88.5" stroke="#38393c" stroke-width="1"/><line x1="0" y1="94.5" x2="30" y2="94.5" stroke="#38393c" stroke-width="1"/><line x1="23" y1="100.5" x2="30" y2="100.5" stroke="#38393c" stroke-width="1"/><line x1="20" y1="106.5" x2="30" y2="106.5" stroke="#38393c" stroke-width="1"/><line x1="23" y1="112.5" x2="30" y2="112.5" stroke="#38393c" stroke-width="1"/><line x1="20" y1="118.5" x2="30" y2="118.5" stroke="#38393c" stroke-width="1"/><line x1="23" y1="124.5" x2="30" y2="124.5" stroke="#38393c" stroke-width="1"/><line x1="20" y1="130.5" x2="30" y2="130.5" stroke="#38393c" stroke-width="1"/><line x1="23" y1="136.5" x2="30" y2="136.5" stroke="#38393c" stroke-width="1"/><line x1="20" y1="142.5" x2="30" y2="142.5" stroke="#38393c" stroke-width="1"/><line x1="23" y1="148.5" x2="30" y2="148.5" stroke="#38393c" stroke-width="1"/><line x1="0" y1="154.5" x2="30" y2="154.5" stroke="#38393c" stroke-width="1"/><line x1="23" y1="160.5" x2="30" y2="160.5" stroke="#38393c" stroke-width="1"/><line x1="20" y1="166.5" x2="30" y2="166.5" stroke="#38393c" stroke-width="1"/><line x1="23" y1="172.5" x2="30" y2="172.5" stroke="#38393c" stroke-width="1"/><line x1="20" y1="178.5" x2="30" y2="178.5" stroke="#38393c" stroke-width="1"/><line x1="23" y1="184.5" x2="30" y2="184.5" stroke="#38393c" stroke-width="1"/><line x1="20" y1="190.5" x2="30" y2="190.5" stroke="#38393c" stroke-width="1"/><line x1="23" y1="196.5" x2="30" y2="196.5" stroke="#38393c" stroke-width="1"/><line x1="20" y1="202.5" x2="30" y2="202.5" stroke="#38393c" stroke-width="1"/><line x1="23" y1="208.5" x2="30" y2="208.5" stroke="#38393c" stroke-width="1"/><line x1="0" y1="214.5" x2="30" y2="214.5" stroke="#38393c" stroke-width="1"/><line x1="23" y1="220.5" x2="30" y2="220.5" stroke="#38393c" stroke-width="1"/><line x1="20" y1="226.5" x2="30" y2="226.5" stroke="#38393c" stroke-width="1"/><line x1="23" y1="232.5" x2="30" y2="232.5" stroke="#38393c" stroke-width="1"/><line x1="20" y1="238.5" x2="30" y2="238.5" stroke="#38393c" stroke-width="1"/><line x1="23" y1="244.5" x2="30" y2="244.5" stroke="#38393c" stroke-width="1"/><line x1="20" y1="250.5" x2="30" y2="250.5" stroke="#38393c" stroke-width="1"/><line x1="23" y1="256.5" x2="30" y2="256.5" stroke="#38393c" stroke-width="1"/><line x1="20" y1="262.5" x2="30" y2="262.5" stroke="#38393c" stroke-width="1"/><line x1="23" y1="268.5" x2="30" y2="268.5" stroke="#38393c" stroke-width="1"/><line x1="0" y1="274.5" x2="30" y2="274.5" stroke="#38393c" stroke-width="1"/><line x1="23" y1="280.5" x2="30" y2="280.5" stroke="#38393c" stroke-width="1"/><line x1="20" y1="286.5" x2="30" y2="286.5" stroke="#38393c" stroke-width="1"/><line x1="23" y1="292.5" x2="30" y2="292.5" stroke="#38393c" stroke-width="1"/><line x1="20" y1="298.5" x2="30" y2="298.5" stroke="#38393c" stroke-width="1"/><line x1="23" y1="304.5" x2="30" y2="304.5" stroke="#38393c" stroke-width="1"/><line x1="20" y1="310.5" x2="30" y2="310.5" stroke="#38393c" stroke-width="1"/><line x1="23" y1="316.5" x2="30" y2="316.5" stroke="#38393c" stroke-width="1"/><line x1="20" y1="322.5" x2="30" y2="322.5" stroke="#38393c" stroke-width="1"/><line x1="23" y1="328.5" x2="30" y2="328.5" stroke="#38393c" stroke-width="1"/><line x1="0" y1="334.5" x2="30" y2="334.5" stroke="#38393c" stroke-width="1"/><line x1="23" y1="340.5" x2="30" y2="340.5" stroke="#38393c" stroke-width="1"/><line x1="20" y1="346.5" x2="30" y2="346.5" stroke="#38393c" stroke-width="1"/><line x1="23" y1="352.5" x2="30" y2="352.5" stroke="#38393c" stroke-width="1"/><line x1="20" y1="358.5" x2="30" y2="358.5" stroke="#38393c" stroke-width="1"/><line x1="23" y1="364.5" x2="30" y2="364.5" stroke="#38393c" stroke-width="1"/><line x1="20" y1="370.5" x2="30" y2="370.5" stroke="#38393c" stroke-width="1"/><line x1="23" y1="376.5" x2="30" y2="376.5" stroke="#38393c" stroke-width="1"/><line x1="20" y1="382.5" x2="30" y2="382.5" stroke="#38393c" stroke-width="1"/><line x1="23" y1="388.5" x2="30" y2="388.5" stroke="#38393c" stroke-width="1"/><line x1="0" y1="394.5" x2="30" y2="394.5" stroke="#38393c" stroke-width="1"/><line x1="23" y1="400.5" x2="30" y2="400.5" stroke="#38393c" stroke-width="1"/><line x1="20" y1="406.5" x2="30" y2="406.5" stroke="#38393c" stroke-width="1"/><line x1="23" y1="412.5" x2="30" y2="412.5" stroke="#38393c" stroke-width="1"/><line x1="20" y1="418.5" x2="30" y2="418.5" stroke="#38393c" stroke-width="1"/><line x1="23" y1="424.5" x2="30" y2="424.5" stroke="#38393c" stroke-width="1"/><line x1="20" y1="430.5" x2="30" y2="430.5" stroke="#38393c" stroke-width="1"/><line x1="23" y1="436.5" x2="30" y2="436.5" stroke="#38393c" stroke-width="1"/><line x1="20" y1="442.5" x2="30" y2="442.5" stroke="#38393c" stroke-width="1"/><line x1="23" y1="448.5" x2="30" y2="448.5" stroke="#38393c" stroke-width="1"/><line x1="0" y1="454.5" x2="30" y2="454.5" stroke="#38393c" stroke-width="1"/><line x1="23" y1="460.5" x2="30" y2="460.5" stroke="#38393c" stroke-width="1"/><line x1="20" y1="466.5" x2="30" y2="466.5" stroke="#38393c" stroke-width="1"/><line x1="23" y1="472.5" x2="30" y2="472.5" stroke="#38393c" stroke-width="1"/><line x1="20" y1="478.5" x2="30" y2="478.5" stroke="#38393c" stroke-width="1"/><line x1="23" y1="484.5" x2="30" y2="484.5" stroke="#38393c" stroke-width="1"/><line x1="20" y1="490.5" x2="30" y2="490.5" stroke="#38393c" stroke-width="1"/><line x1="23" y1="496.5" x2="30" y2="496.5" stroke="#38393c" stroke-width="1"/><line x1="20" y1="502.5" x2="30" y2="502.5" stroke="#38393c" stroke-width="1"/><line x1="23" y1="508.5" x2="30" y2="508.5" stroke="#38393c" stroke-width="1"/><line x1="0" y1="514.5" x2="30" y2="514.5" stroke="#38393c" stroke-width="1"/><line x1="23" y1="520.5" x2="30" y2="520.5" stroke="#38393c" stroke-width="1"/><line x1="20" y1="526.5" x2="30" y2="526.5" stroke="#38393c" stroke-width="1"/><line x1="23" y1="532.5" x2="30" y2="532.5" stroke="#38393c" stroke-width="1"/><line x1="20" y1="538.5" x2="30" y2="538.5" stroke="#38393c" stroke-width="1"/><line x1="23" y1="544.5" x2="30" y2="544.5" stroke="#38393c" stroke-width="1"/><line x1="20" y1="550.5" x2="30" y2="550.5" stroke="#38393c" stroke-width="1"/><line x1="23" y1="556.5" x2="30" y2="556.5" stroke="#38393c" stroke-width="1"/><line x1="20" y1="562.5" x2="30" y2="562.5" stroke="#38393c" stroke-width="1"/><line x1="23" y1="568.5" x2="30" y2="568.5" stroke="#38393c" stroke-width="1"/><line x1="0" y1="574.5" x2="30" y2="574.5" stroke="#38393c" stroke-width="1"/><line x1="23" y1="580.5" x2="30" y2="580.5" stroke="#38393c" stroke-width="1"/><line x1="20" y1="586.5" x2="30" y2="586.5" stroke="#38393c" stroke-width="1"/><line x1="23" y1="592.5" x2="30" y2="592.5" stroke="#38393c" stroke-width="1"/><line x1="20" y1="598.5" x2="30" y2="598.5" stroke="#38393c" stroke-width="1"/><line x1="23" y1="604.5" x2="30" y2="604.5" stroke="#38393c" stroke-width="1"/><line x1="20" y1="610.5" x2="30" y2="610.5" stroke="#38393c" stroke-width="1"/><line x1="23" y1="616.5" x2="30" y2="616.5" stroke="#38393c" stroke-width="1"/><line x1="20" y1="622.5" x2="30" y2="622.5" stroke="#38393c" stroke-width="1"/><line x1="23" y1="628.5" x2="30" y2="628.5" stroke="#38393c" stroke-width="1"/><line x1="0" y1="634.5" x2="30" y2="634.5" stroke="#38393c" stroke-width="1"/><line x1="23" y1="640.5" x2="30" y2="640.5" stroke="#38393c" stroke-width="1"/><line x1="20" y1="646.5" x2="30" y2="646.5" stroke="#38393c" stroke-width="1"/><line x1="23" y1="652.5" x2="30" y2="652.5" stroke="#38393c" stroke-width="1"/><line x1="20" y1="658.5" x2="30" y2="658.5" stroke="#38393c" stroke-width="1"/><line x1="23" y1="664.5" x2="30" y2="664.5" stroke="#38393c" stroke-width="1"/><line x1="20" y1="670.5" x2="30" y2="670.5" stroke="#38393c" stroke-width="1"/><line x1="23" y1="676.5" x2="30" y2="676.5" stroke="#38393c" stroke-width="1"/><line x1="20" y1="682.5" x2="30" y2="682.5" stroke="#38393c" stroke-width="1"/><line x1="23" y1="688.5" x2="30" y2="688.5" stroke="#38393c" stroke-width="1"/><line x1="0" y1="694.5" x2="30" y2="694.5" stroke="#38393c" stroke-width="1"/><line x1="23" y1="700.5" x2="30" y2="700.5" stroke="#38393c" stroke-width="1"/><line x1="20" y1="706.5" x2="30" y2="706.5" stroke="#38393c" stroke-width="1"/><line x1="23" y1="712.5" x2="30" y2="712.5" stroke="#38393c" stroke-width="1"/><line x1="20" y1="718.5" x2="30" y2="718.5" stroke="#38393c" stroke-width="1"/><line x1="23" y1="724.5" x2="30" y2="724.5" stroke="#38393c" stroke-width="1"/><line x1="20" y1="730.5" x2="30" y2="730.5" stroke="#38393c" stroke-width="1"/><line x1="23" y1="736.5" x2="30" y2="736.5" stroke="#38393c" stroke-width="1"/><line x1="20" y1="742.5" x2="30" y2="742.5" stroke="#38393c" stroke-width="1"/><line x1="23" y1="748.5" x2="30" y2="748.5" stroke="#38393c" stroke-width="1"/><line x1="0" y1="754.5" x2="30" y2="754.5" stroke="#38393c" stroke-width="1"/><line x1="23" y1="760.5" x2="30" y2="760.5" stroke="#38393c" stroke-width="1"/><line x1="20" y1="766.5" x2="30" y2="766.5" stroke="#38393c" stroke-width="1"/><line x1="23" y1="772.5" x2="30" y2="772.5" stroke="#38393c" stroke-width="1"/><line x1="20" y1="778.5" x2="30" y2="778.5" stroke="#38393c" stroke-width="1"/><line x1="23" y1="784.5" x2="30" y2="784.5" stroke="#38393c" stroke-width="1"/><line x1="20" y1="790.5" x2="30" y2="790.5" stroke="#38393c" stroke-width="1"/><line x1="23" y1="796.5" x2="30" y2="796.5" stroke="#38393c" stroke-width="1"/><line x1="20" y1="802.5" x2="30" y2="802.5" stroke="#38393c" stroke-width="1"/><line x1="23" y1="808.5" x2="30" y2="808.5" stroke="#38393c" stroke-width="1"/><line x1="0" y1="814.5" x2="30" y2="814.5" stroke="#38393c" stroke-width="1"/><line x1="23" y1="820.5" x2="30" y2="820.5" stroke="#38393c" stroke-width="1"/><line x1="20" y1="826.5" x2="30" y2="826.5" stroke="#38393c" stroke-width="1"/><line x1="23" y1="832.5" x2="30" y2="832.5" stroke="#38393c" stroke-width="1"/><text transform="translate(13.5 -29) rotate(-90)" fill="#949496" font-size="10" font-family="Liberation Sans, sans-serif">-200</text><text transform="translate(13.5 31) rotate(-90)" fill="#949496" font-size="10" font-family="Liberation Sans, sans-serif">-100</text><text transform="translate(13.5 91) rotate(-90)" fill="#949496" font-size="10" font-family="Liberation Sans, sans-serif">0</text><text transform="translate(13.5 151) rotate(-90)" fill="#949496" font-size="10" font-family="Liberation Sans, sans-serif">100</text><text transform="translate(13.5 211) rotate(-90)" fill="#949496" font-size="10" font-family="Liberation Sans, sans-serif">200</text><text transform="translate(13.5 271) rotate(-90)" fill="#949496" font-size="10" font-family="Liberation Sans, sans-serif">300</text><text transform="translate(13.5 331) rotate(-90)" fill="#949496" font-size="10" font-family="Liberation Sans, sans-serif">400</text><text transform="translate(13.5 391) rotate(-90)" fill="#949496" font-size="10" font-family="Liberation Sans, sans-serif">500</text><text transform="translate(13.5 451) rotate(-90)" fill="#949496" font-size="10" font-family="Liberation Sans, sans-serif">600</text><text transform="translate(13.5 511) rotate(-90)" fill="#949496" font-size="10" font-family="Liberation Sans, sans-serif">700</text><text transform="translate(13.5 571) rotate(-90)" fill="#949496" font-size="10" font-family="Liberation Sans, sans-serif">800</text><text transform="translate(13.5 631) rotate(-90)" fill="#949496" font-size="10" font-family="Liberation Sans, sans-serif">900</text><text transform="translate(13.5 691) rotate(-90)" fill="#949496" font-size="10" font-family="Liberation Sans, sans-serif">1000</text><text transform="translate(13.5 751) rotate(-90)" fill="#949496" font-size="10" font-family="Liberation Sans, sans-serif">1100</text><text transform="translate(13.5 811) rotate(-90)" fill="#949496" font-size="10" font-family="Liberation Sans, sans-serif">1200</text></svg>
<svg class="a" style="left:186px;top:111px" width="18" height="18" viewBox="0 0 18 18"><path d="M14.63 11.68A6.1 6.1 0 1 1 13.4 4.8" fill="none" stroke="#d4d4d4" stroke-width="1.3"/><path d="M15.9 3.6L16.1 7.4L12.4 6.9Z" fill="#d4d4d4"/></svg>
<div class="a" style="left:1583px;top:145px;width:6px;height:687px;border-radius:3px;background:#34363a"></div>
<div class="a" style="left:326px;top:230px;width:1152px;height:648px;background:#080503"></div>
<div class="t" style="left:401px;top:258.2px;width:80px;text-align:center;font-size:8.2px;color:#bccbdc;filter:blur(0.2px)">债券简称</div>
<div class="t" style="left:501.5px;top:258.2px;width:80px;text-align:center;font-size:8.2px;color:#bccbdc;filter:blur(0.2px)">票面利率</div>
<div class="t" style="left:581.7px;top:258.2px;width:80px;text-align:center;font-size:8.2px;color:#bccbdc;filter:blur(0.2px)">中债估值</div>
<div class="t" style="left:662.2px;top:258.2px;width:80px;text-align:center;font-size:8.2px;color:#bccbdc;filter:blur(0.2px)">债券期限</div>
<div class="t" style="left:391px;top:322.1px;width:100px;text-align:center;font-size:8.5px;color:#7fa6d6;filter:blur(0.2px)">21****SCP006</div>
<div class="t" style="left:501.5px;top:321.1px;width:80px;text-align:center;font-size:11px;letter-spacing:-0.35px;color:#ececec;filter:blur(0.2px)">6.82%</div>
<div class="t" style="left:581.7px;top:321.1px;width:80px;text-align:center;font-size:11px;letter-spacing:-0.35px;color:#ececec;filter:blur(0.2px)">7.02</div>
<div class="t" style="left:662.2px;top:321.1px;width:80px;text-align:center;font-size:11px;letter-spacing:-0.35px;color:#ececec;filter:blur(0.2px)">7.00</div>
<div class="a" style="left:381px;top:357.3px;width:361px;height:63.4px;background:#12151d"></div>
<div class="t" style="left:391px;top:385.5px;width:100px;text-align:center;font-size:8.5px;color:#7fa6d6;filter:blur(0.2px)">21****MTN004A</div>
<div class="t" style="left:501.5px;top:384.5px;width:80px;text-align:center;font-size:11px;letter-spacing:-0.35px;color:#ececec;filter:blur(0.2px)">2.64%</div>
<div class="t" style="left:581.7px;top:384.5px;width:80px;text-align:center;font-size:11px;letter-spacing:-0.35px;color:#ececec;filter:blur(0.2px)">2.62</div>
<div class="t" style="left:662.2px;top:384.5px;width:80px;text-align:center;font-size:11px;letter-spacing:-0.35px;color:#ececec;filter:blur(0.2px)">0.72</div>
<div class="t" style="left:391px;top:448.9px;width:100px;text-align:center;font-size:8.5px;color:#7fa6d6;filter:blur(0.2px)">21****MTN002A</div>
<div class="t" style="left:501.5px;top:447.9px;width:80px;text-align:center;font-size:11px;letter-spacing:-0.35px;color:#ececec;filter:blur(0.2px)">3.28%</div>
<div class="t" style="left:581.7px;top:447.9px;width:80px;text-align:center;font-size:11px;letter-spacing:-0.35px;color:#ececec;filter:blur(0.2px)">3.43</div>
<div class="t" style="left:662.2px;top:447.9px;width:80px;text-align:center;font-size:11px;letter-spacing:-0.35px;color:#ececec;filter:blur(0.2px)">2.32</div>
<div class="a" style="left:381px;top:484.1px;width:361px;height:63.4px;background:#12151d"></div>
<div class="t" style="left:391px;top:512.3px;width:100px;text-align:center;font-size:8.5px;color:#7fa6d6;filter:blur(0.2px)">21****MTN003B</div>
<div class="t" style="left:501.5px;top:511.3px;width:80px;text-align:center;font-size:11px;letter-spacing:-0.35px;color:#ececec;filter:blur(0.2px)">2.46%</div>
<div class="t" style="left:581.7px;top:511.3px;width:80px;text-align:center;font-size:11px;letter-spacing:-0.35px;color:#ececec;filter:blur(0.2px)">2.41</div>
<div class="t" style="left:662.2px;top:511.3px;width:80px;text-align:center;font-size:11px;letter-spacing:-0.35px;color:#ececec;filter:blur(0.2px)">0.33</div>
<div class="t" style="left:391px;top:575.7px;width:100px;text-align:center;font-size:8.5px;color:#7fa6d6;filter:blur(0.2px)">21****SCP008</div>
<div class="t" style="left:501.5px;top:574.7px;width:80px;text-align:center;font-size:11px;letter-spacing:-0.35px;color:#ececec;filter:blur(0.2px)">5.28%</div>
<div class="t" style="left:581.7px;top:574.7px;width:80px;text-align:center;font-size:11px;letter-spacing:-0.35px;color:#ececec;filter:blur(0.2px)">5.08</div>
<div class="t" style="left:662.2px;top:574.7px;width:80px;text-align:center;font-size:11px;letter-spacing:-0.35px;color:#ececec;filter:blur(0.2px)">1.34</div>
<div class="a" style="left:381px;top:610.9px;width:361px;height:63.4px;background:#12151d"></div>
<div class="t" style="left:391px;top:639.1px;width:100px;text-align:center;font-size:8.5px;color:#7fa6d6;filter:blur(0.2px)">21****MTN009B</div>
<div class="t" style="left:501.5px;top:638.1px;width:80px;text-align:center;font-size:11px;letter-spacing:-0.35px;color:#ececec;filter:blur(0.2px)">3.69%</div>
<div class="t" style="left:581.7px;top:638.1px;width:80px;text-align:center;font-size:11px;letter-spacing:-0.35px;color:#ececec;filter:blur(0.2px)">3.68</div>
<div class="t" style="left:662.2px;top:638.1px;width:80px;text-align:center;font-size:11px;letter-spacing:-0.35px;color:#ececec;filter:blur(0.2px)">5.56</div>
<div class="t" style="left:391px;top:702.5px;width:100px;text-align:center;font-size:8.5px;color:#7fa6d6;filter:blur(0.2px)">21****MTN008A</div>
<div class="t" style="left:501.5px;top:701.5px;width:80px;text-align:center;font-size:11px;letter-spacing:-0.35px;color:#ececec;filter:blur(0.2px)">3.80%</div>
<div class="t" style="left:581.7px;top:701.5px;width:80px;text-align:center;font-size:11px;letter-spacing:-0.35px;color:#ececec;filter:blur(0.2px)">2.33</div>
<div class="t" style="left:662.2px;top:701.5px;width:80px;text-align:center;font-size:11px;letter-spacing:-0.35px;color:#ececec;filter:blur(0.2px)">2.25</div>
<div class="a" style="left:381px;top:737.7px;width:361px;height:63.4px;background:#12151d"></div>
<div class="t" style="left:391px;top:765.9px;width:100px;text-align:center;font-size:8.5px;color:#7fa6d6;filter:blur(0.2px)">21****SCP012</div>
<div class="t" style="left:501.5px;top:764.9px;width:80px;text-align:center;font-size:11px;letter-spacing:-0.35px;color:#ececec;filter:blur(0.2px)">3.45%</div>
<div class="t" style="left:581.7px;top:764.9px;width:80px;text-align:center;font-size:11px;letter-spacing:-0.35px;color:#ececec;filter:blur(0.2px)">3.49</div>
<div class="t" style="left:662.2px;top:764.9px;width:80px;text-align:center;font-size:11px;letter-spacing:-0.35px;color:#ececec;filter:blur(0.2px)">1.23</div>
<div class="t" style="left:391px;top:829.3px;width:100px;text-align:center;font-size:8.5px;color:#7fa6d6;filter:blur(0.2px)">21****MTN007A</div>
<div class="t" style="left:501.5px;top:828.3px;width:80px;text-align:center;font-size:11px;letter-spacing:-0.35px;color:#ececec;filter:blur(0.2px)">3.84%</div>
<div class="t" style="left:581.7px;top:828.3px;width:80px;text-align:center;font-size:11px;letter-spacing:-0.35px;color:#ececec;filter:blur(0.2px)">3.86</div>
<div class="t" style="left:662.2px;top:828.3px;width:80px;text-align:center;font-size:11px;letter-spacing:-0.35px;color:#ececec;filter:blur(0.2px)">4.12</div>
<svg class="a" style="left:1060px;top:495px" width="160" height="170" viewBox="1060 495 160 170"><path d="M1084.5 503.4H1193.2L1206.8 579.6L1193.2 656.6H1084.5L1070.9 579.6Z" fill="#5180d0"/></svg>
<div class="a" style="left:894px;top:424px;width:490px;height:312px;border:1px solid #3b9cf4"></div>
<svg class="a" style="left:886.4px;top:416.3px" width="16" height="16" viewBox="0 0 16 16"><circle cx="8" cy="8" r="6.05" fill="#42a5fd" stroke="#ffffff" stroke-width="1.9"/></svg>
<svg class="a" style="left:1375.4px;top:416.3px" width="16" height="16" viewBox="0 0 16 16"><circle cx="8" cy="8" r="6.05" fill="#42a5fd" stroke="#ffffff" stroke-width="1.9"/></svg>
<svg class="a" style="left:886.4px;top:727.3px" width="16" height="16" viewBox="0 0 16 16"><circle cx="8" cy="8" r="6.05" fill="#42a5fd" stroke="#ffffff" stroke-width="1.9"/></svg>
<svg class="a" style="left:1375.4px;top:727.3px" width="16" height="16" viewBox="0 0 16 16"><circle cx="8" cy="8" r="6.05" fill="#42a5fd" stroke="#ffffff" stroke-width="1.9"/></svg>
<div class="a" style="left:1062px;top:750px;width:154px;height:27px;background:#45a7fd;border-radius:2px"></div>
<div class="t" style="left:1065.5px;top:757px;font-size:14px;font-weight:bold;color:#ffffff;letter-spacing:0.3px">815×518</div>
<div class="t" style="left:1135px;top:757px;font-size:14px;font-weight:bold;color:#ffffff;letter-spacing:0.1px">X:948 Y:325</div>
<div class="a" style="left:1593px;top:105px;width:1px;height:868px;background:#050505"></div>
<div class="a" style="left:1594px;top:105px;width:326px;height:868px;background:#1f2021"></div>
<div class="a" style="left:1703px;top:105px;width:217px;height:33px;background:#2a2b2e"></div>
<div class="a" style="left:1811px;top:105px;width:1px;height:33px;background:#1b1c1e"></div>
<div class="a" style="left:1594px;top:105px;width:108px;height:2px;background:#2b6cf5"></div>
<div class="t" style="left:1634px;top:116px;font-size:14px;color:#2f7dfb">样式</div>
<div class="t" style="left:1743px;top:116px;font-size:14px;color:#cfcfcf">数据</div>
<div class="t" style="left:1852px;top:116px;font-size:14px;color:#cfcfcf">交互</div>
<div class="a" style="left:1619px;top:106px;width:80px;height:43px;border:4.3px solid #f5333f;border-radius:7px"></div>
<div class="t" style="left:1610px;top:160.5px;font-size:14px;font-weight:500;color:#ffffff">模型查看器组件</div>
<svg class="a" style="left:1714px;top:159px" width="14" height="15" viewBox="0 0 14 15"><path d="M3 11L3.5 8L9.5 2L12 4.5L6 10.5Z" fill="none" stroke="#e0e0e0" stroke-width="1.1"/><path d="M1.5 13.5H12.5" stroke="#e0e0e0" stroke-width="1.1"/></svg>
<div class="t" style="left:1610px;top:199px;font-size:12px;color:#c4c4c4">图表位置</div>
<div class="a" style="left:1678px;top:191px;width:88px;height:28px;border:1px solid #38393c;border-radius:2px;background:#26272a"></div>
<div class="a" style="left:1707px;top:191px;width:1px;height:28px;background:#38393c"></div>
<div class="t" style="left:1678px;top:198px;width:29px;text-align:center;font-size:13px;color:#d2d2d2">X</div>
<div class="t" style="left:1715px;top:200px;font-size:12px;color:#d2d2d2">948</div>
<div class="a" style="left:1776px;top:191px;width:90px;height:28px;border:1px solid #38393c;border-radius:2px;background:#26272a"></div>
<div class="a" style="left:1805px;top:191px;width:1px;height:28px;background:#38393c"></div>
<div class="t" style="left:1776px;top:198px;width:29px;text-align:center;font-size:13px;color:#d2d2d2">Y</div>
<div class="t" style="left:1813px;top:200px;font-size:12px;color:#d2d2d2">325</div>
<div class="t" style="left:1610px;top:243px;font-size:12px;color:#c4c4c4">图表尺寸</div>
<div class="a" style="left:1678px;top:235px;width:88px;height:28px;border:1px solid #38393c;border-radius:2px;background:#26272a"></div>
<div class="a" style="left:1707px;top:235px;width:1px;height:28px;background:#38393c"></div>
<div class="t" style="left:1678px;top:242px;width:29px;text-align:center;font-size:13px;color:#d2d2d2">W</div>
<div class="t" style="left:1715px;top:244px;font-size:12px;color:#d2d2d2">815</div>
<div class="a" style="left:1776px;top:235px;width:90px;height:28px;border:1px solid #38393c;border-radius:2px;background:#26272a"></div>
<div class="a" style="left:1805px;top:235px;width:1px;height:28px;background:#38393c"></div>
<div class="t" style="left:1776px;top:242px;width:29px;text-align:center;font-size:13px;color:#d2d2d2">H</div>
<div class="t" style="left:1813px;top:244px;font-size:12px;color:#d2d2d2">518</div>
<svg class="a" style="left:1877px;top:240px" width="10" height="16" viewBox="0 0 10 16"><path d="M2 6V4A3 3 0 0 1 8 4V6M2 10V12A3 3 0 0 0 8 12V10" fill="none" stroke="#9a9a9a" stroke-width="1.4"/></svg>
<div class="t" style="left:1647px;top:292px;font-size:14px;color:#2f7dfb">图形属性</div>
<div class="t" style="left:1811px;top:292px;font-size:14px;color:#d4d4d4">卡片设置</div>
<div class="a" style="left:1594px;top:318px;width:326px;height:1px;background:#2e2f33"></div>
<div class="a" style="left:1594px;top:317px;width:163px;height:2px;background:#2b6cf5"></div>
<svg class="a" style="left:1611px;top:342px" width="10" height="6" viewBox="0 0 10 6"><path d="M0 0H10L5 6Z" fill="#e0e0e0"/></svg>
<div class="t" style="left:1630px;top:338px;font-size:14px;font-weight:500;color:#ffffff">基础</div>
<div class="t" style="left:1610px;top:378px;font-size:12px;color:#c4c4c4">选择模型</div>
<div class="a" style="left:1696px;top:371px;width:208px;height:27px;border:1px solid #36373b;border-radius:2px;background:#27282b"></div>
<div class="t" style="left:1704px;top:380px;font-size:12px;letter-spacing:-0.2px;color:#d4d4d4">ceshi.zip_xlfjd</div>
<svg class="a" style="left:1885px;top:381.5px" width="11" height="7" viewBox="0 0 11 7"><path d="M0.5 0.5L5.5 6L10.5 0.5" fill="none" stroke="#8a8a8a" stroke-width="1"/></svg>
<div class="a" style="left:1696px;top:409px;width:208px;height:28px;background:#2b6cf5;border-radius:2px"></div>
<div class="t" style="left:1696px;top:416px;width:208px;text-align:center;font-size:14px;color:#ffffff">3D模型编辑器</div>
<div class="a" style="left:1675px;top:399px;width:243px;height:64.7px;border:4.3px solid #f5333f;border-radius:7px"></div></body></html>
